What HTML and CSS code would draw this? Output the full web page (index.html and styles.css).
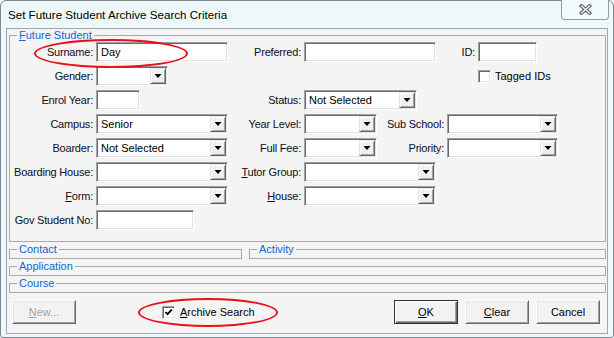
FILE: index.html
```html
<!DOCTYPE html>
<html lang="en">
<head>
    <meta charset="UTF-8">
    <title>Set Future Student Archive Search Criteria</title>
    <link rel="stylesheet" href="styles.css">
</head>
<body>
    <div class="window">
        <div class="titlebar">
            <span class="title">Set Future Student Archive Search Criteria</span>
            <button class="close" type="button">
                <svg width="13" height="11" viewBox="0 0 13 11">
                    <path d="M2.5 2 L10.5 9 M10.5 2 L2.5 9" stroke="#5b6266" stroke-width="3.6" stroke-linecap="square"/>
                    <path d="M2.5 2 L10.5 9 M10.5 2 L2.5 9" stroke="#eef1f2" stroke-width="1.4" stroke-linecap="square"/>
                </svg>
            </button>
        </div>

        <div class="client">
            <fieldset class="group main">
                <legend><u>F</u>uture Student</legend>
                <div class="rows">
                    <div class="row">
                        <span class="lbl">Surname:</span>
                        <div class="field w132"><span class="val">Day</span></div>
                        <span class="lbl mid">Preferred:</span>
                        <div class="field w132"></div>
                        <span class="lbl id">ID:</span>
                        <div class="field w59"></div>
                    </div>
                    <div class="row">
                        <span class="lbl">Gender:</span>
                        <div class="field combo w72"><span class="val"></span><span class="drop"></span></div>
                        <label class="tick tagged"><span class="check"></span>Tagged IDs</label>
                    </div>
                    <div class="row">
                        <span class="lbl">Enrol Year:</span>
                        <div class="field w44"></div>
                        <span class="lbl status">Status:</span>
                        <div class="field combo w113"><span class="val">Not Selected</span><span class="drop"></span></div>
                    </div>
                    <div class="row">
                        <span class="lbl">Campus:</span>
                        <div class="field combo w132"><span class="val">Senior</span><span class="drop"></span></div>
                        <span class="lbl mid">Year Level:</span>
                        <div class="field combo w73"><span class="val"></span><span class="drop"></span></div>
                        <span class="lbl sub">Sub School:</span>
                        <div class="field combo w111"><span class="val"></span><span class="drop"></span></div>
                    </div>
                    <div class="row">
                        <span class="lbl">Boarder:</span>
                        <div class="field combo w132"><span class="val">Not Selected</span><span class="drop"></span></div>
                        <span class="lbl mid">Full Fee:</span>
                        <div class="field combo w73"><span class="val"></span><span class="drop"></span></div>
                        <span class="lbl sub">Priority:</span>
                        <div class="field combo w111"><span class="val"></span><span class="drop"></span></div>
                    </div>
                    <div class="row">
                        <span class="lbl"><span>Boardin<u>g</u> House:</span></span>
                        <div class="field combo w132"><span class="val"></span><span class="drop"></span></div>
                        <span class="lbl mid"><span><u>T</u>utor Group:</span></span>
                        <div class="field combo w132"><span class="val"></span><span class="drop"></span></div>
                    </div>
                    <div class="row">
                        <span class="lbl"><span><u>F</u>orm:</span></span>
                        <div class="field combo w132"><span class="val"></span><span class="drop"></span></div>
                        <span class="lbl mid"><span><u>H</u>ouse:</span></span>
                        <div class="field combo w132"><span class="val"></span><span class="drop"></span></div>
                    </div>
                    <div class="row">
                        <span class="lbl">Gov Student No:</span>
                        <div class="field w98"></div>
                    </div>
                </div>
            </fieldset>

            <div class="pair">
                <fieldset class="group collapsed contact"><legend>Contact</legend></fieldset>
                <fieldset class="group collapsed activity"><legend>Activity</legend></fieldset>
            </div>
            <fieldset class="group collapsed"><legend>Application</legend></fieldset>
            <fieldset class="group collapsed"><legend>Course</legend></fieldset>

            <div class="actions">
                <button class="btn" type="button" disabled><u>N</u>ew...</button>
                <label class="tick archive">
                    <span class="check">
                        <svg width="9" height="9" viewBox="0 0 9 9"><path d="M1.5 4 L3.5 6.2 L7.8 1.6" fill="none" stroke="#000" stroke-width="1.8"/></svg>
                    </span>
                    <span><u>A</u>rchive Search</span>
                </label>
                <div class="btns">
                    <button class="btn default" type="button"><u>O</u>K</button>
                    <button class="btn" type="button"><u>C</u>lear</button>
                    <button class="btn" type="button">Cancel</button>
                </div>
            </div>
        </div>

        <!-- red markup rings drawn over the dialog -->
        <div class="ring ring-surname"></div>
        <div class="ring ring-archive"></div>
    </div>
</body>
</html>
```

FILE: styles.css
```css
body {
    margin: 0;
    font-family: "Liberation Sans", Arial, sans-serif;
    font-size: 11px;
    color: #111;
    background: #fff;
}
u {
    text-decoration: underline;
    text-underline-offset: 1px;
}
.window {
    position: relative;
    width: 614px;
    height: 338px;
    box-sizing: border-box;
    border: 1px solid #7d8a90;
    border-radius: 6px 6px 3px 3px;
    background: #eef8fa;
    display: flex;
    flex-direction: column;
}
.titlebar {
    height: 27px;
    flex: none;
    display: flex;
    align-items: center;
}
.title {
    padding-left: 7px;
    font-size: 11.6px;
    color: #000;
}
.close {
    align-self: flex-start;
    margin-left: auto;
    margin-right: 4px;
    margin-top: -1px;
    width: 48px;
    height: 20px;
    padding: 0;
    border: 1px solid #8e9ca3;
    border-top: none;
    border-radius: 0 0 4px 4px;
    background: #f3fafb;
    display: flex;
    align-items: center;
    justify-content: center;
}
.client {
    flex: 1;
    margin: 0 5px 3px;
    border: 1px solid #a0a8ac;
    background: #f4f4f4;
    display: flex;
    flex-direction: column;
}
.group {
    margin: 0 1px 0 2px;
    padding: 0 0 2px 7px;
    border: 1px solid #a9a9a9;
    min-width: 0;
}
.group legend {
    padding: 0 2px;
    font-size: 11px;
    line-height: 13px;
    color: #1565d8;
}
.group.main {
    padding-bottom: 11px;
}
.group.collapsed {
    margin-top: 1px;
}
.pair {
    display: flex;
    gap: 7px;
    margin: 1px 1px 0 2px;
}
.pair .group {
    margin: 0;
}
.contact {
    width: 233px;
    box-sizing: border-box;
}
.activity {
    flex: 1;
}
.rows {
    display: flex;
    flex-direction: column;
    gap: 4px;
}
.row {
    display: flex;
    align-items: center;
    height: 20px;
}
/* labels sit right-aligned against their field; long ones spill to the left */
.lbl {
    flex: none;
    width: 79px;
    box-sizing: border-box;
    padding-right: 3px;
    display: flex;
    justify-content: flex-end;
    white-space: nowrap;
    letter-spacing: -0.2px;
    color: #0d0d1a;
}
.lbl.mid { width: 76px; }
.lbl.id { width: 42px; }
.lbl.status { width: 164px; }
.lbl.sub { width: 70px; }

.field {
    flex: none;
    box-sizing: border-box;
    height: 20px;
    padding: 1px;
    background: #fff;
    border: 1px solid;
    border-color: #a0a0a0 #fff #fff #a0a0a0;
    box-shadow: inset 1px 1px 0 #696969, inset -1px -1px 0 #e3e3e3;
    display: flex;
}
.field .val {
    flex: 1;
    padding-left: 3px;
    line-height: 16px;
    color: #000;
    white-space: nowrap;
}
.w44 { width: 44px; }
.w59 { width: 59px; }
.w72 { width: 72px; }
.w73 { width: 73px; }
.w98 { width: 98px; }
.w111 { width: 111px; }
.w113 { width: 113px; }
.w132 { width: 132px; }

.drop {
    flex: none;
    width: 16px;
    height: 16px;
    box-sizing: border-box;
    background: #f0f0f0;
    border: 1px solid;
    border-color: #e3e3e3 #696969 #696969 #e3e3e3;
    box-shadow: inset 1px 1px 0 #fff, inset -1px -1px 0 #a0a0a0;
    display: flex;
    align-items: center;
    justify-content: center;
}
.drop::after {
    content: "";
    width: 7px;
    height: 4px;
    background: #000;
    clip-path: polygon(0 0, 100% 0, 50% 100%);
}

.tick {
    display: flex;
    align-items: center;
    color: #000;
    white-space: nowrap;
}
.check {
    flex: none;
    width: 13px;
    height: 13px;
    box-sizing: border-box;
    background: #fff;
    border: 1px solid;
    border-color: #a0a0a0 #fff #fff #a0a0a0;
    box-shadow: inset 1px 1px 0 #696969, inset -1px -1px 0 #e3e3e3;
    display: flex;
    align-items: center;
    justify-content: center;
}
.tagged {
    margin-left: 310px;
    gap: 4px;
}
.archive {
    margin-left: 86px;
    gap: 5px;
}

.actions {
    display: flex;
    align-items: center;
    margin-top: 7px;
    padding: 0 7px 0 5px;
}
.btns {
    margin-left: auto;
    display: flex;
    gap: 7px;
}
.btn {
    width: 64px;
    height: 24px;
    box-sizing: border-box;
    padding: 0;
    font: inherit;
    color: #000;
    background: #f2f2f2;
    border: 1px solid;
    border-color: #fff #696969 #696969 #fff;
    box-shadow: inset 1px 1px 0 #e3e3e3, inset -1px -1px 0 #a0a0a0;
}
.btn.default {
    border-color: #333;
    box-shadow: inset 1px 1px 0 #fff, inset -1px -1px 0 #696969, inset -2px -2px 0 #a0a0a0;
}
.btn:disabled {
    color: #a0a0a0;
    text-shadow: 1px 1px 0 #fff;
}

.ring {
    position: absolute;
    box-sizing: border-box;
    border: 2px solid #e8101a;
    border-radius: 50%;
}
.ring-surname {
    left: 33px;
    top: 38px;
    width: 154px;
    height: 29px;
}
.ring-archive {
    left: 137px;
    top: 297px;
    width: 140px;
    height: 29px;
}
```
